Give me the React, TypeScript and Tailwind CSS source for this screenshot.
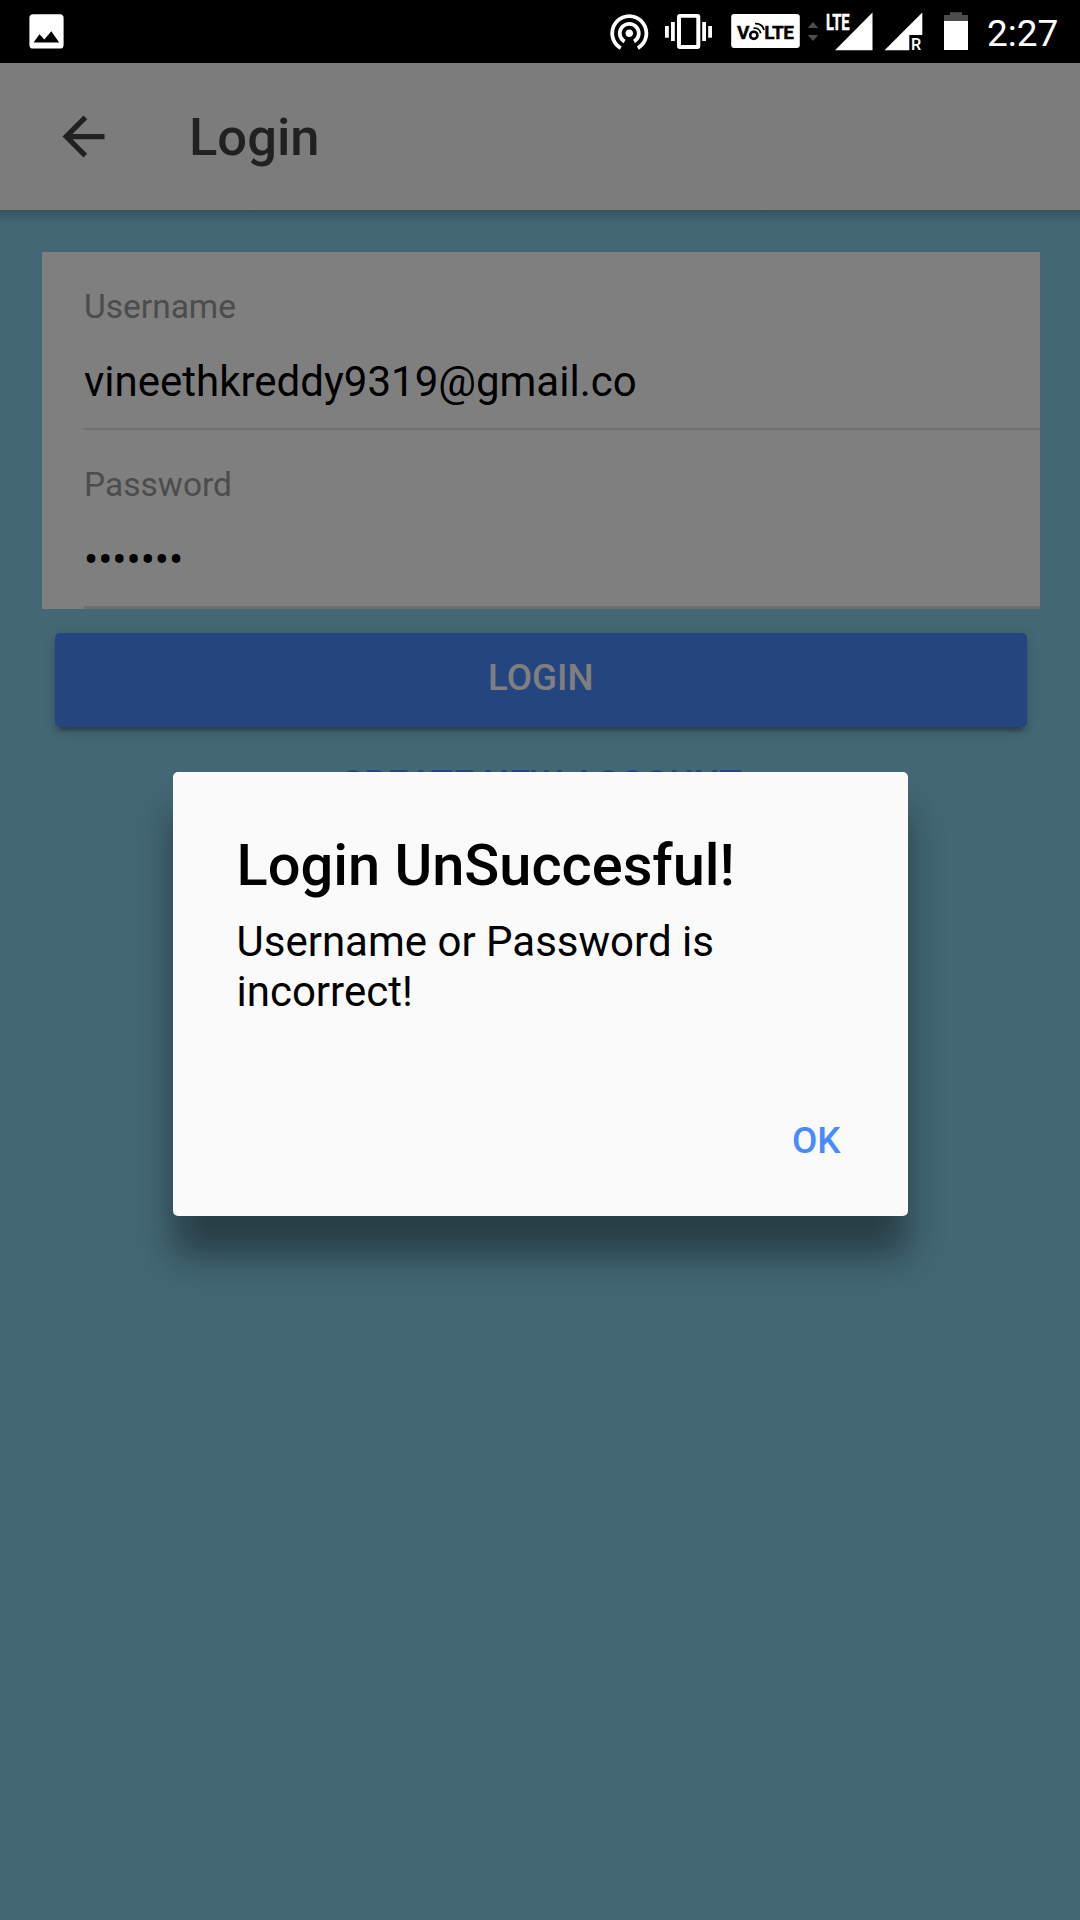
import React from 'react';

function StatusBar() {
  return (
    <div className="flex h-[63px] w-full shrink-0 justify-between bg-black text-white">
      <svg className="ml-[24px]" width="45" height="63" viewBox="24 0 45 63">
        <rect x="29.4" y="14.3" width="34.2" height="34.2" rx="3.6" fill="#fff" />
        <path d="M33.6 42.6 39.5 34.2 44.3 39.6 51.3 31.3 59.2 42.6Z" fill="#000" />
      </svg>
      <div className="flex">
        {/* hotspot */}
        <svg width="48" height="63" viewBox="606 0 48 63">
          <path
            transform="translate(606.5 8.6) scale(1.9)"
            fill="#fff"
            d="M12 11c-1.1 0-2 .9-2 2s.9 2 2 2 2-.9 2-2-.9-2-2-2zm6 2c0-3.31-2.69-6-6-6s-6 2.69-6 6c0 2.22 1.21 4.15 3 5.19l1-1.74c-1.19-.7-2-1.97-2-3.45 0-2.21 1.79-4 4-4s4 1.79 4 4c0 1.48-.81 2.75-2 3.45l1 1.74c1.79-1.04 3-2.97 3-5.19zM12 3C6.48 3 2 7.48 2 13c0 3.7 2.01 6.92 4.99 8.65l1-1.73C5.61 18.53 4 15.96 4 13c0-4.42 3.58-8 8-8s8 3.58 8 8c0 2.96-1.61 5.53-4 6.92l1 1.73c2.99-1.73 5-4.95 5-8.65 0-5.52-4.48-10-10-10z"
          />
        </svg>
        {/* vibrate */}
        <svg width="66" height="63" viewBox="654 0 66 63" fill="#fff">
          <rect x="665" y="26" width="3.8" height="11.7" />
          <rect x="671" y="22" width="3.8" height="19" />
          <rect x="702.2" y="22" width="3.8" height="19" />
          <rect x="708.2" y="26" width="3.8" height="11.7" />
          <path fillRule="evenodd" d="M680 14h17.300a3 3 0 0 1 3 3v29a3 3 0 0 1-3 3h-17.300a3 3 0 0 1-3-3v-29a3 3 0 0 1 3-3zM681 17.800v27.200h15.300v-27.200z" />
        </svg>
        {/* VoLTE */}
        <svg width="84" height="63" viewBox="720 0 84 63">
          <rect x="731.2" y="14" width="68.6" height="34" rx="3" fill="#fff" />
          <g fill="#000" fontFamily="Roboto, sans-serif" fontWeight="700" fontSize="19" stroke="#000" strokeWidth=".4">
            <text x="737" y="38.7">V</text>
            <text x="764.3" y="38.7" letterSpacing="-.5">LTE</text>
          </g>
          <g fill="none" stroke="#000">
            <circle cx="753.800" cy="35.300" r="3.600" strokeWidth="2.600" />
            <path d="M753.500 28.300c3.600-.5 6.500 1.600 7.200 5" strokeWidth="1.800" />
            <path d="M755 23.600c4.600-.2 8 2.400 9 6.400" strokeWidth="1.800" />
          </g>
        </svg>
        <svg width="18" height="63" viewBox="804 0 18 63" fill="#4d4d4d">
          <path d="M807.700 28 813 22 818.300 28ZM807.700 35 813 41 818.300 35Z" />
        </svg>
        {/* signal, SIM 1 */}
        <svg width="56" height="63" viewBox="822 0 56 63" fill="#fff">
          <text transform="translate(825.9 29.700) scale(.67 1)" fontFamily="Roboto, sans-serif" fontWeight="700" fontSize="22" stroke="#fff" strokeWidth=".5">LTE</text>
          <path d="M835 50.300 872.500 12.500V50.300Z" />
        </svg>
        {/* signal, SIM 2 */}
        <svg width="56" height="63" viewBox="878 0 56 63" fill="#fff">
          <path d="M884.500 50.300 922.300 12.500V35H909.300V50.300Z" />
          <text transform="translate(911 50) scale(.95 1)" fontFamily="Roboto, sans-serif" fontWeight="500" fontSize="17">R</text>
        </svg>
        {/* battery */}
        <svg width="48" height="63" viewBox="934 0 48 63">
          <path d="M944 21V15H950V12.200H962V15H968V21Z" fill="#4d4d4d" />
          <rect x="944" y="21" width="24" height="29" fill="#fff" />
        </svg>
        <div className="w-[98px] pl-[5px] text-[37px] leading-[67px]">2:27</div>
      </div>
    </div>
  );
}

function Field({ label, value, last }: { label: string; value: string; last?: boolean }) {
  return (
    <div className={last ? 'ml-[42px] h-[179px] border-b-[3px] border-[#dedede] pt-[35px]' : 'ml-[42px] h-[178px] border-b-2 border-[#dedede] pt-[35px]'}>
      <div className="text-[33.5px] leading-[40px] text-[#999999]">{label}</div>
      <div className="mt-[30px] text-[42px] leading-[50px] text-black">{value}</div>
    </div>
  );
}

export default function App() {
  return (
    <div className="flex h-[1920px] w-[1080px] flex-col overflow-hidden font-[Roboto,sans-serif]">
      <StatusBar />
      <div className="relative flex flex-1 flex-col bg-[#87ceeb]">
        <header className="flex h-[147px] items-center bg-[#f8f8f8] pl-[52px] text-[#424242]">
          <svg width="63" height="63" viewBox="0 0 24 24" fill="currentColor">
            <path d="M20 11H7.830l5.590-5.590L12 4l-8 8 8 8 1.410-1.410L7.830 13H20v-2z" />
          </svg>
          <h1 className="ml-[74px] text-[52.5px] leading-[60px] font-medium">Login</h1>
        </header>
        <div className="h-[13px] bg-linear-to-b from-black/20 to-transparent" />
        <main className="mt-[29px] flex flex-col pr-[40px] pl-[42px]">
          <div className="bg-white">
            <Field label="Username" value="vineethkreddy9319@gmail.co" />
            <Field label="Password" value="•••••••" last />
          </div>
          <button className="mr-[13.5px] ml-[13px] mt-[24px] h-[94px] rounded-[5px] bg-[#488aff] pb-[4px] text-[36.75px] font-medium text-white shadow-[0_5px_5px_0_rgba(0,0,0,0.14),0_8px_3px_-5px_rgba(0,0,0,0.2),0_3px_13px_0_rgba(0,0,0,0.12)]">
            LOGIN
          </button>
          <button className="mr-[13px] ml-[13px] mt-[11px] h-[94px] pb-[3px] text-[36.75px] font-medium tracking-[0.08px] text-[#488aff]">
            CREATE NEW ACCOUNT
          </button>
        </main>
        <div className="absolute inset-0 flex justify-center bg-black/50 pt-[709px]">
          <div className="ml-[1px] flex h-[443.5px] w-[735px] flex-col rounded-[5px] bg-[#fafafa] pr-[62.5px] pl-[63.5px] text-black shadow-[0_40px_36px_rgba(0,0,0,0.4)]">
            <h2 className="mt-[59px] text-[57.75px] leading-[68px] font-medium">Login UnSuccesful!</h2>
            <p className="mt-[18px] text-[42px] leading-[50px]">Username or Password is incorrect!</p>
            <button className="mt-[77px] mr-[5px] self-end text-[36.75px] leading-[94px] font-medium text-[#488aff]">OK</button>
          </div>
        </div>
      </div>
    </div>
  );
}
